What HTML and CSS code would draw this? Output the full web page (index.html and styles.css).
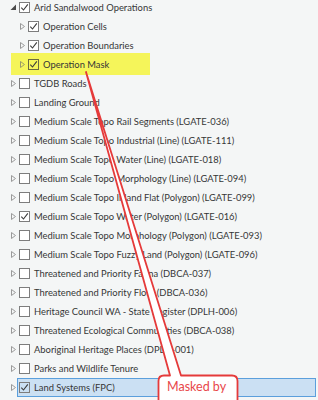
FILE: index.html
```html
<!DOCTYPE html>
<html>
<head>
<meta charset="utf-8">
<link rel="stylesheet" href="styles.css">
</head>
<body>
<div class="pane">
  <div class="list">
    <div class="row l0">
      <span class="tog"><svg width="7" height="7" viewBox="0 0 7 7"><polygon points="6,0.5 6,6 0.5,6" fill="#4a4a4a"/></svg></span>
      <span class="body"><span class="cb on"><svg width="9" height="9" viewBox="0 0 9 9"><polyline points="1.3,4.6 3.5,7 7.8,1.4" fill="none" stroke="#3b3b3b" stroke-width="1.1"/></svg></span><span class="lbl">Arid Sandalwood Operations</span></span>
    </div>
    <div class="row l1">
      <span class="tog"><svg width="5" height="7" viewBox="0 0 5 7"><polygon points="0.5,0.5 4.5,3.5 0.5,6.5" fill="none" stroke="#9a9a9a" stroke-width="1"/></svg></span>
      <span class="body"><span class="cb on"><svg width="9" height="9" viewBox="0 0 9 9"><polyline points="1.3,4.6 3.5,7 7.8,1.4" fill="none" stroke="#3b3b3b" stroke-width="1.1"/></svg></span><span class="lbl">Operation Cells</span></span>
    </div>
    <div class="row l1">
      <span class="tog"><svg width="5" height="7" viewBox="0 0 5 7"><polygon points="0.5,0.5 4.5,3.5 0.5,6.5" fill="none" stroke="#9a9a9a" stroke-width="1"/></svg></span>
      <span class="body"><span class="cb on"><svg width="9" height="9" viewBox="0 0 9 9"><polyline points="1.3,4.6 3.5,7 7.8,1.4" fill="none" stroke="#3b3b3b" stroke-width="1.1"/></svg></span><span class="lbl">Operation Boundaries</span></span>
    </div>
    <div class="row l1 hl">
      <span class="tog"><svg width="5" height="7" viewBox="0 0 5 7"><polygon points="0.5,0.5 4.5,3.5 0.5,6.5" fill="none" stroke="#9a9a6a" stroke-width="1"/></svg></span>
      <span class="body"><span class="cb on"><svg width="9" height="9" viewBox="0 0 9 9"><polyline points="1.3,4.6 3.5,7 7.8,1.4" fill="none" stroke="#3b3b3b" stroke-width="1.1"/></svg></span><span class="lbl">Operation Mask</span></span>
    </div>
    <div class="row l0"><span class="tog"><svg width="5" height="7" viewBox="0 0 5 7"><polygon points="0.5,0.5 4.5,3.5 0.5,6.5" fill="none" stroke="#9a9a9a" stroke-width="1"/></svg></span><span class="body"><span class="cb"></span><span class="lbl">TGDB Roads</span></span></div>
    <div class="row l0"><span class="tog"><svg width="5" height="7" viewBox="0 0 5 7"><polygon points="0.5,0.5 4.5,3.5 0.5,6.5" fill="none" stroke="#9a9a9a" stroke-width="1"/></svg></span><span class="body"><span class="cb"></span><span class="lbl">Landing Ground</span></span></div>
    <div class="row l0"><span class="tog"><svg width="5" height="7" viewBox="0 0 5 7"><polygon points="0.5,0.5 4.5,3.5 0.5,6.5" fill="none" stroke="#9a9a9a" stroke-width="1"/></svg></span><span class="body"><span class="cb"></span><span class="lbl">Medium Scale Topo Rail Segments (LGATE-036)</span></span></div>
    <div class="row l0"><span class="tog"><svg width="5" height="7" viewBox="0 0 5 7"><polygon points="0.5,0.5 4.5,3.5 0.5,6.5" fill="none" stroke="#9a9a9a" stroke-width="1"/></svg></span><span class="body"><span class="cb"></span><span class="lbl">Medium Scale Topo Industrial (Line) (LGATE-111)</span></span></div>
    <div class="row l0"><span class="tog"><svg width="5" height="7" viewBox="0 0 5 7"><polygon points="0.5,0.5 4.5,3.5 0.5,6.5" fill="none" stroke="#9a9a9a" stroke-width="1"/></svg></span><span class="body"><span class="cb"></span><span class="lbl">Medium Scale Topo Water (Line) (LGATE-018)</span></span></div>
    <div class="row l0"><span class="tog"><svg width="5" height="7" viewBox="0 0 5 7"><polygon points="0.5,0.5 4.5,3.5 0.5,6.5" fill="none" stroke="#9a9a9a" stroke-width="1"/></svg></span><span class="body"><span class="cb"></span><span class="lbl">Medium Scale Topo Morphology (Line) (LGATE-094)</span></span></div>
    <div class="row l0"><span class="tog"><svg width="5" height="7" viewBox="0 0 5 7"><polygon points="0.5,0.5 4.5,3.5 0.5,6.5" fill="none" stroke="#9a9a9a" stroke-width="1"/></svg></span><span class="body"><span class="cb"></span><span class="lbl">Medium Scale Topo Inland Flat (Polygon) (LGATE-099)</span></span></div>
    <div class="row l0"><span class="tog"><svg width="5" height="7" viewBox="0 0 5 7"><polygon points="0.5,0.5 4.5,3.5 0.5,6.5" fill="none" stroke="#9a9a9a" stroke-width="1"/></svg></span><span class="body"><span class="cb on"><svg width="9" height="9" viewBox="0 0 9 9"><polyline points="1.3,4.6 3.5,7 7.8,1.4" fill="none" stroke="#3b3b3b" stroke-width="1.1"/></svg></span><span class="lbl">Medium Scale Topo Water (Polygon) (LGATE-016)</span></span></div>
    <div class="row l0"><span class="tog"><svg width="5" height="7" viewBox="0 0 5 7"><polygon points="0.5,0.5 4.5,3.5 0.5,6.5" fill="none" stroke="#9a9a9a" stroke-width="1"/></svg></span><span class="body"><span class="cb"></span><span class="lbl">Medium Scale Topo Morphology (Polygon) (LGATE-093)</span></span></div>
    <div class="row l0"><span class="tog"><svg width="5" height="7" viewBox="0 0 5 7"><polygon points="0.5,0.5 4.5,3.5 0.5,6.5" fill="none" stroke="#9a9a9a" stroke-width="1"/></svg></span><span class="body"><span class="cb"></span><span class="lbl">Medium Scale Topo Fuzzy Land (Polygon) (LGATE-096)</span></span></div>
    <div class="row l0"><span class="tog"><svg width="5" height="7" viewBox="0 0 5 7"><polygon points="0.5,0.5 4.5,3.5 0.5,6.5" fill="none" stroke="#9a9a9a" stroke-width="1"/></svg></span><span class="body"><span class="cb"></span><span class="lbl">Threatened and Priority Fauna (DBCA-037)</span></span></div>
    <div class="row l0"><span class="tog"><svg width="5" height="7" viewBox="0 0 5 7"><polygon points="0.5,0.5 4.5,3.5 0.5,6.5" fill="none" stroke="#9a9a9a" stroke-width="1"/></svg></span><span class="body"><span class="cb"></span><span class="lbl">Threatened and Priority Flora (DBCA-036)</span></span></div>
    <div class="row l0"><span class="tog"><svg width="5" height="7" viewBox="0 0 5 7"><polygon points="0.5,0.5 4.5,3.5 0.5,6.5" fill="none" stroke="#9a9a9a" stroke-width="1"/></svg></span><span class="body"><span class="cb"></span><span class="lbl">Heritage Council WA - State Register (DPLH-006)</span></span></div>
    <div class="row l0"><span class="tog"><svg width="5" height="7" viewBox="0 0 5 7"><polygon points="0.5,0.5 4.5,3.5 0.5,6.5" fill="none" stroke="#9a9a9a" stroke-width="1"/></svg></span><span class="body"><span class="cb"></span><span class="lbl">Threatened Ecological Communities (DBCA-038)</span></span></div>
    <div class="row l0"><span class="tog"><svg width="5" height="7" viewBox="0 0 5 7"><polygon points="0.5,0.5 4.5,3.5 0.5,6.5" fill="none" stroke="#9a9a9a" stroke-width="1"/></svg></span><span class="body"><span class="cb"></span><span class="lbl">Aboriginal Heritage Places (DPLH-001)</span></span></div>
    <div class="row l0"><span class="tog"><svg width="5" height="7" viewBox="0 0 5 7"><polygon points="0.5,0.5 4.5,3.5 0.5,6.5" fill="none" stroke="#9a9a9a" stroke-width="1"/></svg></span><span class="body"><span class="cb"></span><span class="lbl">Parks and Wildlife Tenure</span></span></div>
    <div class="row l0 sel"><span class="tog"><svg width="5" height="7" viewBox="0 0 5 7"><polygon points="0.5,0.5 4.5,3.5 0.5,6.5" fill="none" stroke="#9a9a9a" stroke-width="1"/></svg></span><span class="body"><span class="cb on"><svg width="9" height="9" viewBox="0 0 9 9"><polyline points="1.3,4.6 3.5,7 7.8,1.4" fill="none" stroke="#3b3b3b" stroke-width="1.1"/></svg></span><span class="lbl">Land Systems (FPC)</span></span></div>
  </div>

  <svg class="pointer" width="318" height="400" viewBox="0 0 318 400">
    <path d="M158.5,381 Q158.5,375.5 164,375.5 L170,375.5 L86,72 L181,375.5 L232,375.5 Q237.5,375.5 237.5,381 L237.5,410 L158.5,410 Z" fill="#ffffff" stroke="#e53a3a" stroke-width="1.8" stroke-linejoin="round"/>
  </svg>
  <div class="callout-text">Masked by</div>
</div>
</body>
</html>
```
FILE: styles.css
```css
html, body {
  margin: 0;
  padding: 0;
  background: #f4f6f6;
}
.pane {
  position: relative;
  width: 318px;
  height: 400px;
  overflow: hidden;
  font-family: Lato, "Liberation Sans", sans-serif;
  font-size: 9.4px;
  color: #363636;
}
.list {
  margin-top: -2px;
}
.row {
  display: flex;
  align-items: center;
  height: 19px;
  padding-left: 10px;
  white-space: nowrap;
}
.row.l1 {
  padding-left: 19px;
}
.tog {
  width: 7px;
  height: 19px;
  display: flex;
  align-items: center;
  justify-content: center;
  flex: none;
}
.body {
  display: flex;
  align-items: center;
  flex: 1;
  height: 19px;
  padding-left: 2px;
  box-sizing: border-box;
}
.cb {
  width: 11px;
  height: 11px;
  box-sizing: border-box;
  border: 1px solid #7d7d7d;
  background: #ffffff;
  display: flex;
  align-items: center;
  justify-content: center;
  flex: none;
}
.lbl {
  margin-left: 4px;
}
.row.hl {
  margin-left: 11px;
  width: 139px;
  padding-left: 8px;
  height: 22px;
  margin-top: -2px;
  margin-bottom: -1px;
  background: #f5f55a;
  box-sizing: border-box;
}
.row.hl .cb {
  background: #f5f55a;
  border-color: #6a6a40;
}
.row.sel .body {
  background: #cbe0f3;
  border: 1px solid #5b9fdc;
  padding-left: 1px;
  margin-right: 2px;
}
.row.sel .cb {
  background: #cbe0f3;
}
.pointer {
  position: absolute;
  left: 0;
  top: 0;
}
.callout-text {
  position: absolute;
  left: 167px;
  top: 379px;
  font-size: 12.5px;
  color: #e8474a;
  line-height: 16px;
}
```
